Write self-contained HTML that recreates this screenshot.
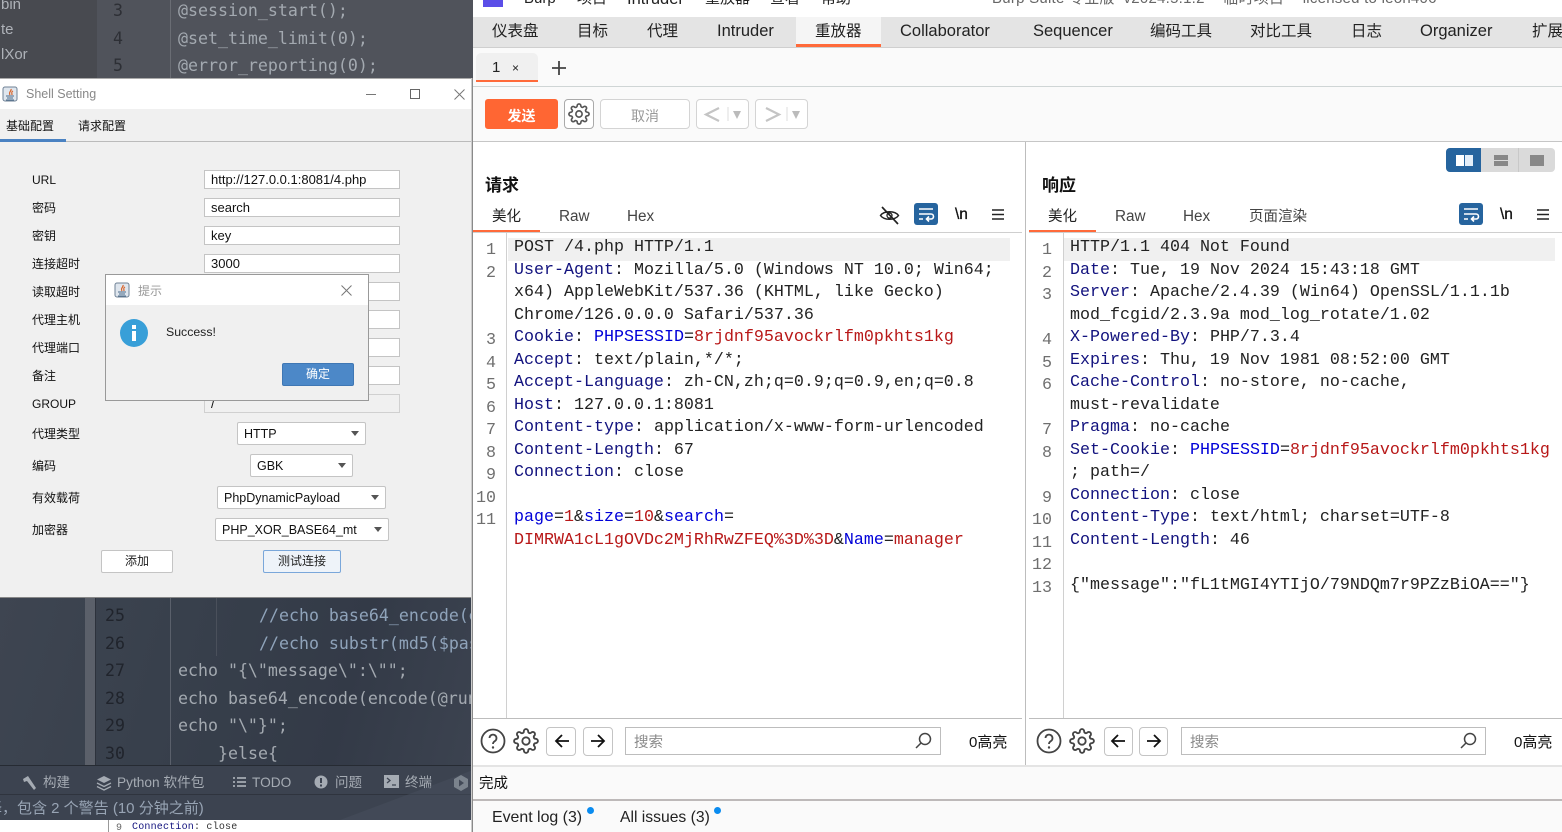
<!DOCTYPE html>
<html><head><meta charset="utf-8">
<style>
html,body{margin:0;padding:0;width:1562px;height:832px;overflow:hidden;background:#fff}
body{position:relative;font-family:"Liberation Sans","Noto Sans CJK SC",sans-serif;color:#111}
.a,.t,.b,svg.a{position:absolute}
.t{white-space:nowrap;line-height:1}
.dk{font-family:"DejaVu Sans Mono",monospace;font-size:16.6px;color:#a3a9b0;white-space:pre;position:absolute;line-height:20px}
.ln{color:#2d2f35}
.ln2{color:#20242c}
.lb{position:absolute;left:32px;font-size:12px;line-height:14px;color:#111;white-space:nowrap}
.f{position:absolute;left:204px;width:194px;height:17px;background:#fff;border:1px solid #c4c4c4;font-size:13px;line-height:17px;text-indent:6px;color:#111}
.cb{position:absolute;height:21px;background:#fff;border:1px solid #c4c4c4;border-radius:2px;font-size:12.5px;line-height:22px;text-indent:6px;color:#111;white-space:nowrap}
.cb i{position:absolute;right:6px;top:8px;width:0;height:0;border:4.5px solid transparent;border-top:5px solid #555;border-bottom:0}
.bt{position:absolute;background:#fff;border:1px solid #c4c4c4;border-radius:2px;text-align:center;font-size:12px;line-height:21px;color:#222}
.tab{position:absolute;top:24px;font-size:15.5px;line-height:16px;color:#222;white-space:nowrap}
.tab.l{font-size:16.5px;top:23px}
.code{position:absolute;margin:0;font-family:"Liberation Mono",monospace;font-size:16.67px;line-height:22.5px;color:#222;white-space:pre}
.num{position:absolute;margin:0;font-family:"Liberation Mono",monospace;font-size:16.67px;line-height:22.5px;color:#6f6f6f;white-space:pre;text-align:right}
.k{color:#12127e}.n{color:#0000d8}.v{color:#b81818}
.sb{position:absolute;background:#fff;border:1px solid #c4c4c4;border-radius:4px;box-sizing:border-box}
.sub{position:absolute;top:209px;font-size:14.5px;line-height:16px;color:#444}
.sub.l{font-size:15.300px}
.srch{position:absolute;top:727px;height:28px;box-sizing:border-box;border:1px solid #bdbdbd;background:#fff;font-size:14.5px;line-height:30px;text-indent:8px;color:#8a8a8a}
</style></head><body>
<svg width="0" height="0" style="position:absolute"><defs>
<g id="gear" fill="none" stroke-linecap="round" stroke-linejoin="round"><circle cx="12" cy="12" r="3.4"/><path d="M19.4 15a1.65 1.65 0 0 0 .33 1.82l.06.06a2 2 0 0 1 0 2.83 2 2 0 0 1-2.83 0l-.06-.06a1.65 1.65 0 0 0-1.82-.33 1.65 1.65 0 0 0-1 1.51V21a2 2 0 0 1-2 2 2 2 0 0 1-2-2v-.09A1.65 1.65 0 0 0 9 19.4a1.65 1.65 0 0 0-1.82.33l-.06.06a2 2 0 0 1-2.83 0 2 2 0 0 1 0-2.83l.06-.06a1.65 1.65 0 0 0 .33-1.82 1.65 1.65 0 0 0-1.51-1H3a2 2 0 0 1-2-2 2 2 0 0 1 2-2h.09A1.65 1.65 0 0 0 4.6 9a1.65 1.65 0 0 0-.33-1.82l-.06-.06a2 2 0 0 1 0-2.83 2 2 0 0 1 2.83 0l.06.06a1.65 1.65 0 0 0 1.82.33H9a1.65 1.65 0 0 0 1-1.51V3a2 2 0 0 1 2-2 2 2 0 0 1 2 2v.09a1.65 1.65 0 0 0 1 1.51 1.65 1.65 0 0 0 1.82-.33l.06-.06a2 2 0 0 1 2.83 0 2 2 0 0 1 0 2.83l-.06.06a1.65 1.65 0 0 0-.33 1.82V9a1.65 1.65 0 0 0 1.51 1H21a2 2 0 0 1 2 2 2 2 0 0 1-2 2h-.09a1.65 1.65 0 0 0-1.51 1z"/></g>
<g id="java"><rect x="1" y="1" width="14" height="14" rx="2" fill="#dfe6ee" stroke="#6f8296"/><path d="M9 3c1 2-3 3-1 6M11 5c-2 1-1 2-1 4" stroke="#d9642a" fill="none" stroke-width="1.2"/><path d="M4 10h8M5 12h6M4 14h8" stroke="#4a6a8a"/></g>
<g id="wrap"><rect width="24" height="22" rx="3" fill="#26649e"/><path d="M5 6h14M5 11h12a2.5 2.5 0 0 1 0 5h-4M15 13.5l-2.5 2.5 2.5 2.5M5 16h4" fill="none" stroke="#fff" stroke-width="1.6"/></g>
<g id="menu"><path d="M0 1h12M0 5.500h12M0 10h12" stroke="#222" stroke-width="1.6"/></g>
</defs></svg>

<!-- LEFT TOP DARK -->
<div class="a" style="left:0;top:0;width:473px;height:79px;background:#50535b"></div>
<div class="a" style="left:0;top:0;width:97px;height:79px;background:#484a50"></div>
<div class="a" style="left:170px;top:0;width:1px;height:79px;background:#6a6d74"></div>
<div class="t" style="left:1px;top:-3px;font-size:15px;color:#aeb2b8">bin</div>
<div class="t" style="left:1px;top:22px;font-size:15px;color:#aeb2b8">te</div>
<div class="t" style="left:1px;top:47px;font-size:15px;color:#aeb2b8">lXor</div>
<div class="dk ln" style="left:113px;top:1px">3</div>
<div class="dk ln" style="left:113px;top:29px">4</div>
<div class="dk ln" style="left:113px;top:56px">5</div>
<div class="dk" style="left:178px;top:1px">@session_start();</div>
<div class="dk" style="left:178px;top:29px">@set_time_limit(0);</div>
<div class="dk" style="left:178px;top:56px">@error_reporting(0);</div>

<!-- LEFT BOTTOM DARK -->
<div class="a" style="left:0;top:597px;width:473px;height:223px;background:linear-gradient(105deg,#3e4551 0%,#38404c 35%,#333a47 70%,#3d4451 100%)"></div>
<div class="a" style="left:85px;top:598px;width:10px;height:167px;background:#5b606a"></div>
<div class="a" style="left:95px;top:598px;width:1px;height:167px;background:#2d323c"></div>
<div class="a" style="left:170px;top:598px;width:1px;height:167px;background:#5a606b"></div>
<div class="a" style="left:216px;top:598px;width:1px;height:58px;background:#4a505b"></div>
<div class="dk ln2" style="left:105px;top:606px">25</div>
<div class="dk ln2" style="left:105px;top:634px">26</div>
<div class="dk ln2" style="left:105px;top:661px">27</div>
<div class="dk ln2" style="left:105px;top:689px">28</div>
<div class="dk ln2" style="left:105px;top:716px">29</div>
<div class="dk ln2" style="left:105px;top:744px">30</div>
<div class="dk" style="left:259px;top:606px;color:#8fa3ba">//echo base64_encode(e</div>
<div class="dk" style="left:259px;top:634px;color:#8fa3ba">//echo substr(md5($pas</div>
<div class="dk" style="left:178px;top:661px">echo "{\"message\":\"";</div>
<div class="dk" style="left:178px;top:689px">echo base64_encode(encode(@run</div>
<div class="dk" style="left:178px;top:716px">echo "\"}";</div>
<div class="dk" style="left:218px;top:744px">}else{</div>
<div class="a" style="left:0;top:765px;width:473px;height:1px;background:#262b33"></div>
<div class="a" style="left:0;top:766px;width:473px;height:54px;background:#3c4350"></div>
<div class="a" style="left:0;top:794px;width:473px;height:1px;background:#2f343e"></div>
<svg class="a" style="left:22px;top:775px" width="16" height="17"><path d="M1 4l5-3 8 12-2 2-7-9-3 1z" fill="#a5abb3"/></svg>
<div class="t" style="left:43px;top:776px;font-size:13.5px;color:#a5abb3">构建</div>
<svg class="a" style="left:96px;top:775px" width="16" height="17"><path d="M8 1l7 3.500-7 3.500-7-3.500z" fill="#a5abb3"/><path d="M1 8l7 3.500 7-3.500M1 11.500l7 3.500 7-3.500" stroke="#a5abb3" fill="none" stroke-width="1.300"/></svg>
<div class="t" style="left:117px;top:776px;font-size:13.700px;color:#a5abb3">Python 软件包</div>
<svg class="a" style="left:233px;top:776px" width="13" height="12"><path d="M0 2h2M4 2h9M0 6h2M4 6h9M0 10h2M4 10h9" stroke="#a5abb3" stroke-width="1.800"/></svg>
<div class="t" style="left:252px;top:776px;font-size:13.700px;color:#a5abb3">TODO</div>
<svg class="a" style="left:314px;top:775px" width="14" height="14"><circle cx="7" cy="7" r="6.500" fill="#a5abb3"/><path d="M7 3v5M7 9.500v2" stroke="#3c4350" stroke-width="2"/></svg>
<div class="t" style="left:335px;top:776px;font-size:13.500px;color:#a5abb3">问题</div>
<svg class="a" style="left:384px;top:775px" width="15" height="13"><rect width="15" height="13" fill="#a5abb3"/><path d="M3 3l3 2.500-3 2.500M8 10h4" stroke="#3c4350" fill="none" stroke-width="1.300"/></svg>
<div class="t" style="left:405px;top:776px;font-size:13.500px;color:#a5abb3">终端</div>
<svg class="a" style="left:453px;top:775px" width="16" height="16"><path d="M8 0l7 4v8l-7 4-7-4V4z" fill="#a5abb3"/><path d="M6 4.500l5 3.500-5 3.500z" fill="#3c4350"/></svg>
<div class="t" style="left:-13px;top:801px;font-size:15px;color:#98a4b4">译，包含 2 个警告 (10 分钟之前)</div>
<svg class="a" style="left:340px;top:770px" width="133" height="50"><path d="M0 50L133 0V50z" fill="#4a5160" opacity=".45"/></svg>

<!-- Under strip -->
<div class="a" style="left:0;top:820px;width:473px;height:12px;background:#fff"></div>
<div class="a" style="left:108px;top:820px;width:1px;height:12px;background:#999"></div>
<div class="t" style="left:116px;top:824px;font-size:10px;font-family:'Liberation Mono',monospace;color:#666">9</div>
<div class="t" style="left:132px;top:823px;font-size:10px;font-family:'Liberation Mono',monospace;color:#12127e;letter-spacing:.2px">Connection<span style="color:#333">: close</span></div>

<!-- SHELL SETTING WINDOW -->
<div class="a" style="left:0;top:78px;width:473px;height:520px;background:#f0f0f0;border-top:1px solid #aaa;border-bottom:1px solid #888;box-sizing:border-box"></div>
<div class="a" style="left:0;top:79px;width:472px;height:30px;background:#fff"></div>
<svg class="a" style="left:2px;top:86px" width="16" height="16"><use href="#java"/></svg>
<div class="t" style="left:26px;top:88px;font-size:12.500px;color:#888">Shell Setting</div>
<div class="a" style="left:366px;top:94px;width:10px;height:1px;background:#777"></div>
<div class="a" style="left:410px;top:89px;width:8px;height:8px;border:1px solid #666"></div>
<svg class="a" style="left:454px;top:89px" width="11" height="11"><path d="M.5.500l10 10M10.500.500l-10 10" stroke="#777"/></svg>
<div class="t" style="left:6px;top:120px;font-size:12px;color:#111">基础配置</div>
<div class="t" style="left:78px;top:120px;font-size:12px;color:#111">请求配置</div>
<div class="a" style="left:0;top:141px;width:472px;height:1px;background:#bbb"></div>
<div class="a" style="left:0;top:139px;width:66px;height:3px;background:#4a82c2"></div>

<div class="lb" style="top:173px">URL</div>
<div class="lb" style="top:201px">密码</div>
<div class="lb" style="top:229px">密钥</div>
<div class="lb" style="top:257px">连接超时</div>
<div class="lb" style="top:285px">读取超时</div>
<div class="lb" style="top:313px">代理主机</div>
<div class="lb" style="top:341px">代理端口</div>
<div class="lb" style="top:369px">备注</div>
<div class="lb" style="top:397px">GROUP</div>
<div class="lb" style="top:427px">代理类型</div>
<div class="lb" style="top:459px">编码</div>
<div class="lb" style="top:491px">有效载荷</div>
<div class="lb" style="top:523px">加密器</div>

<div class="f" style="top:170px">http://127.0.0.1:8081/4.php</div>
<div class="f" style="top:198px">search</div>
<div class="f" style="top:226px">key</div>
<div class="f" style="top:254px">3000</div>
<div class="f" style="top:282px"></div>
<div class="f" style="top:310px"></div>
<div class="f" style="top:338px"></div>
<div class="f" style="top:366px"></div>
<div class="f" style="top:394px;background:#f0f0f0;border-color:#d0d0d0">/</div>

<div class="cb" style="left:237px;top:422px;width:127px">HTTP<i></i></div>
<div class="cb" style="left:250px;top:454px;width:101px">GBK<i></i></div>
<div class="cb" style="left:217px;top:486px;width:167px">PhpDynamicPayload<i></i></div>
<div class="cb" style="left:215px;top:518px;width:172px">PHP_XOR_BASE64_mt<i></i></div>
<div class="bt" style="left:101px;top:550px;width:70px;height:21px">添加</div>
<div class="bt" style="left:263px;top:550px;width:76px;height:21px;background:#eef3f9;border-color:#7aa7da">测试连接</div>

<!-- DIALOG -->
<div class="a" style="left:105px;top:274px;width:262px;height:125px;background:#f0f0f0;border:1px solid #999"></div>
<div class="a" style="left:106px;top:275px;width:262px;height:30px;background:#fff"></div>
<svg class="a" style="left:114px;top:282px" width="16" height="16"><use href="#java"/></svg>
<div class="t" style="left:138px;top:285px;font-size:12px;color:#999">提示</div>
<svg class="a" style="left:341px;top:285px" width="11" height="11"><path d="M.5.500l10 10M10.500.500l-10 10" stroke="#777"/></svg>
<svg class="a" style="left:120px;top:319px" width="28" height="28"><circle cx="14" cy="14" r="14" fill="#389fd8"/><rect x="12" y="6" width="4" height="4" fill="#fff"/><rect x="12" y="12" width="4" height="10" fill="#fff"/></svg>
<div class="t" style="left:166px;top:326px;font-size:12.300px;color:#222">Success!</div>
<div class="a" style="left:282px;top:363px;width:70px;height:21px;background:#4c88c8;border:1px solid #3f77b4;border-radius:2px;color:#fff;font-size:12px;line-height:21px;text-align:center">确定</div>

<div class="a" style="left:471px;top:78px;width:1px;height:754px;background:#ccc"></div>
<div class="a" style="left:472px;top:78px;width:1px;height:754px;background:#8a8a8a"></div>

<!-- BURP -->
<div class="a" style="left:473px;top:0;width:1089px;height:832px;background:#fff"></div>
<div class="a" style="left:483px;top:0;width:20px;height:7px;background:#5b4ee8"></div>
<div class="t" style="left:524px;top:-9px;font-size:15px;color:#222">Burp</div>
<div class="t" style="left:577px;top:-9px;font-size:15px;color:#222">项目</div>
<div class="t" style="left:627px;top:-9px;font-size:16.500px;color:#222">Intruder</div>
<div class="t" style="left:705px;top:-9px;font-size:15px;color:#222">重放器</div>
<div class="t" style="left:770px;top:-9px;font-size:15px;color:#222">查看</div>
<div class="t" style="left:821px;top:-9px;font-size:15px;color:#222">帮助</div>
<div class="t" style="left:992px;top:-9px;font-size:15px;color:#666;letter-spacing:.25px">Burp Suite 专业版 &nbsp;v2024.5.1.2 &nbsp;- 临时项目 &nbsp;- licensed to leon406</div>

<div class="a" style="left:473px;top:17px;width:1089px;height:31px;background:#e4e4e4;border-bottom:1px solid #cfcfcf;box-sizing:border-box"></div>
<div class="a" style="left:796px;top:17px;width:85px;height:30px;background:#f5f5f5;border-bottom:3px solid #ff6a3a;box-sizing:border-box"></div>
<div class="tab" style="left:492px">仪表盘</div>
<div class="tab" style="left:577px">目标</div>
<div class="tab" style="left:647px">代理</div>
<div class="tab l" style="left:717px">Intruder</div>
<div class="tab" style="left:815px">重放器</div>
<div class="tab l" style="left:900px">Collaborator</div>
<div class="tab l" style="left:1033px">Sequencer</div>
<div class="tab" style="left:1150px">编码工具</div>
<div class="tab" style="left:1250px">对比工具</div>
<div class="tab" style="left:1351px">日志</div>
<div class="tab l" style="left:1420px">Organizer</div>
<div class="tab" style="left:1532px">扩展</div>

<div class="a" style="left:473px;top:48px;width:1089px;height:93px;background:#fafafa"></div>
<div class="a" style="left:473px;top:86px;width:1089px;height:1px;background:#cfd5d5"></div>
<div class="a" style="left:476px;top:53px;width:62px;height:29px;background:#f0f0f0;border-radius:5px 5px 0 0;border-bottom:2px solid #ff6a3a;box-sizing:border-box"></div>
<div class="t" style="left:492px;top:60px;font-size:15px;color:#222">1</div>
<div class="t" style="left:512px;top:62px;font-size:12px;color:#222">×</div>
<svg class="a" style="left:551px;top:60px" width="16" height="16"><path d="M8 1v14M1 8h14" stroke="#444" stroke-width="1.800"/></svg>

<div class="a" style="left:485px;top:99px;width:73px;height:30px;background:#ff6633;border-radius:3px;color:#fff;font-size:14px;font-weight:bold;line-height:34px;text-align:center">发送</div>
<div class="sb" style="left:564px;top:99px;width:30px;height:30px;border-color:#aaa"></div>
<svg class="a" style="left:568px;top:103px" width="22" height="22" viewBox="0 0 24 24" stroke="#555" stroke-width="1.800"><use href="#gear"/></svg>
<div class="sb" style="left:600px;top:99px;width:90px;height:30px;color:#999;font-size:14px;line-height:32px;text-align:center;border-color:#d4d4d4">取消</div>
<div class="sb" style="left:696px;top:99px;width:53px;height:30px;border-color:#d4d4d4"></div>
<svg class="a" style="left:696px;top:99px" width="53" height="30"><path d="M23 9l-13 6.500 13 6.500" fill="none" stroke="#c4c4c4" stroke-width="2.200"/><path d="M32 8v14" stroke="#ddd"/><path d="M37 12h8l-4 8z" fill="#bbb"/></svg>
<div class="sb" style="left:755px;top:99px;width:53px;height:30px;border-color:#d4d4d4"></div>
<svg class="a" style="left:755px;top:99px" width="53" height="30"><path d="M11 9l13 6.500-13 6.500" fill="none" stroke="#c4c4c4" stroke-width="2.200"/><path d="M32 8v14" stroke="#ddd"/><path d="M37 12h8l-4 8z" fill="#bbb"/></svg>

<div class="a" style="left:473px;top:141px;width:1089px;height:1px;background:#c6c6c6"></div>
<div class="a" style="left:1025px;top:142px;width:1px;height:623px;background:#bdbdbd"></div>

<!-- view toggle -->
<div class="a" style="left:1446px;top:148px;width:109px;height:24px;background:#dadada;border-radius:4px"></div>
<div class="a" style="left:1446px;top:148px;width:35px;height:24px;background:#26649e;border-radius:4px 0 0 4px"></div>
<div class="a" style="left:1456px;top:155px;width:8px;height:11px;background:#fff"></div>
<div class="a" style="left:1465px;top:155px;width:8px;height:11px;background:#e4eef8"></div>
<div class="a" style="left:1494px;top:155px;width:14px;height:5px;background:#888"></div>
<div class="a" style="left:1494px;top:161px;width:14px;height:5px;background:#888"></div>
<div class="a" style="left:1518px;top:148px;width:1px;height:24px;background:#c8c8c8"></div>
<div class="a" style="left:1530px;top:155px;width:14px;height:11px;background:#888"></div>

<!-- Request head -->
<div class="t" style="left:485px;top:177px;font-size:17px;font-weight:bold;color:#111">请求</div>
<div class="sub" style="left:492px;color:#222">美化</div>
<div class="sub l" style="left:559px">Raw</div>
<div class="sub l" style="left:627px">Hex</div>
<div class="a" style="left:473px;top:232px;width:549px;height:1px;background:#cfcfcf"></div>
<div class="a" style="left:473px;top:230px;width:67px;height:2px;background:#ff6a3a"></div>
<svg class="a" style="left:879px;top:205px" width="21" height="20"><path d="M1.500 10.500C5 5.500 16 5.500 19.500 10.500 16 15.500 5 15.500 1.500 10.500z" fill="none" stroke="#222" stroke-width="1.500"/><circle cx="10.500" cy="10.500" r="2.500" fill="none" stroke="#222" stroke-width="1.300"/><path d="M3 2l16 17" stroke="#222" stroke-width="1.700"/></svg>
<svg class="a" style="left:914px;top:203px" width="24" height="22"><use href="#wrap"/></svg>
<div class="t" style="left:955px;top:207px;font-size:15.500px;color:#111;-webkit-text-stroke:.3px #111">\n</div>
<svg class="a" style="left:992px;top:209px" width="12" height="12"><use href="#menu"/></svg>

<!-- Response head -->
<div class="t" style="left:1042px;top:177px;font-size:17px;font-weight:bold;color:#111">响应</div>
<div class="sub" style="left:1048px;color:#222">美化</div>
<div class="sub l" style="left:1115px">Raw</div>
<div class="sub l" style="left:1183px">Hex</div>
<div class="sub" style="left:1249px">页面渲染</div>
<div class="a" style="left:1029px;top:232px;width:533px;height:1px;background:#cfcfcf"></div>
<div class="a" style="left:1029px;top:230px;width:67px;height:2px;background:#ff6a3a"></div>
<svg class="a" style="left:1459px;top:203px" width="24" height="22"><use href="#wrap"/></svg>
<div class="t" style="left:1500px;top:207px;font-size:15.500px;color:#111;-webkit-text-stroke:.3px #111">\n</div>
<svg class="a" style="left:1537px;top:209px" width="12" height="12"><use href="#menu"/></svg>

<!-- Editors -->
<div class="a" style="left:506px;top:233px;width:1px;height:485px;background:#d0d0d0"></div>
<div class="a" style="left:508px;top:238px;width:502px;height:23px;background:#f0f0f0"></div>
<pre class="num" style="left:470px;top:240px;width:26px">1
2


3
4
5
6
7
8
9
10
11</pre>
<pre class="code" style="left:514px;top:237px">POST /4.php HTTP/1.1
<span class="k">User-Agent</span>: Mozilla/5.0 (Windows NT 10.0; Win64;
x64) AppleWebKit/537.36 (KHTML, like Gecko)
Chrome/126.0.0.0 Safari/537.36
<span class="k">Cookie</span>: <span class="n">PHPSESSID</span>=<span class="v">8rjdnf95avockrlfm0pkhts1kg</span>
<span class="k">Accept</span>: text/plain,*/*;
<span class="k">Accept-Language</span>: zh-CN,zh;q=0.9;q=0.9,en;q=0.8
<span class="k">Host</span>: 127.0.0.1:8081
<span class="k">Content-type</span>: application/x-www-form-urlencoded
<span class="k">Content-Length</span>: 67
<span class="k">Connection</span>: close

<span class="n">page</span>=<span class="v">1</span>&amp;<span class="n">size</span>=<span class="v">10</span>&amp;<span class="n">search</span>=
<span class="v">DIMRWA1cL1gOVDc2MjRhRwZFEQ%3D%3D</span>&amp;<span class="n">Name</span>=<span class="v">manager</span></pre>

<div class="a" style="left:1063px;top:233px;width:1px;height:485px;background:#d0d0d0"></div>
<div class="a" style="left:1064px;top:238px;width:491px;height:23px;background:#f0f0f0"></div>
<pre class="num" style="left:1026px;top:240px;width:26px">1
2
3

4
5
6

7
8

9
10
11
12
13</pre>
<pre class="code" style="left:1070px;top:237px">HTTP/1.1 404 Not Found
<span class="k">Date</span>: Tue, 19 Nov 2024 15:43:18 GMT
<span class="k">Server</span>: Apache/2.4.39 (Win64) OpenSSL/1.1.1b
mod_fcgid/2.3.9a mod_log_rotate/1.02
<span class="k">X-Powered-By</span>: PHP/7.3.4
<span class="k">Expires</span>: Thu, 19 Nov 1981 08:52:00 GMT
<span class="k">Cache-Control</span>: no-store, no-cache,
must-revalidate
<span class="k">Pragma</span>: no-cache
<span class="k">Set-Cookie</span>: <span class="n">PHPSESSID</span>=<span class="v">8rjdnf95avockrlfm0pkhts1kg</span>
; path=/
<span class="k">Connection</span>: close
<span class="k">Content-Type</span>: text/html; charset=UTF-8
<span class="k">Content-Length</span>: 46

{"message":"fL1tMGI4YTIjO/79NDQm7r9PZzBiOA=="}</pre>

<!-- Search bars -->
<div class="a" style="left:473px;top:718px;width:549px;height:1px;background:#bdbdbd"></div>
<div class="a" style="left:1029px;top:718px;width:533px;height:1px;background:#bdbdbd"></div>

<svg class="a" style="left:480px;top:728px" width="26" height="26"><circle cx="13" cy="13" r="11.500" fill="none" stroke="#444" stroke-width="1.800"/><path d="M9.500 10a3.500 3.500 0 1 1 5.500 3c-1.300.8-2 1.500-2 3" fill="none" stroke="#444" stroke-width="1.800"/><circle cx="13" cy="19.500" r="1.200" fill="#444"/></svg>
<svg class="a" style="left:513px;top:728px" width="26" height="26" viewBox="0 0 24 24" stroke="#444" stroke-width="1.700"><use href="#gear"/></svg>
<div class="sb" style="left:546px;top:727px;width:30px;height:29px"></div>
<svg class="a" style="left:554px;top:733px" width="16" height="16"><path d="M15 8H2M8 2L2 8l6 6" fill="none" stroke="#111" stroke-width="1.800"/></svg>
<div class="sb" style="left:583px;top:727px;width:30px;height:29px"></div>
<svg class="a" style="left:590px;top:733px" width="16" height="16"><path d="M1 8h13M8 2l6 6-6 6" fill="none" stroke="#111" stroke-width="1.800"/></svg>
<div class="srch" style="left:625px;width:316px">搜索</div>
<svg class="a" style="left:915px;top:732px" width="17" height="17"><circle cx="10" cy="7" r="5.500" fill="none" stroke="#444" stroke-width="1.500"/><path d="M6 11l-5 5" stroke="#444" stroke-width="1.500"/></svg>
<div class="t" style="left:969px;top:735px;font-size:15px;color:#111">0高亮</div>

<svg class="a" style="left:1036px;top:728px" width="26" height="26"><circle cx="13" cy="13" r="11.500" fill="none" stroke="#444" stroke-width="1.800"/><path d="M9.500 10a3.500 3.500 0 1 1 5.500 3c-1.300.8-2 1.500-2 3" fill="none" stroke="#444" stroke-width="1.800"/><circle cx="13" cy="19.500" r="1.200" fill="#444"/></svg>
<svg class="a" style="left:1069px;top:728px" width="26" height="26" viewBox="0 0 24 24" stroke="#444" stroke-width="1.700"><use href="#gear"/></svg>
<div class="sb" style="left:1104px;top:727px;width:29px;height:29px"></div>
<svg class="a" style="left:1110px;top:733px" width="16" height="16"><path d="M15 8H2M8 2L2 8l6 6" fill="none" stroke="#111" stroke-width="1.800"/></svg>
<div class="sb" style="left:1139px;top:727px;width:29px;height:29px"></div>
<svg class="a" style="left:1146px;top:733px" width="16" height="16"><path d="M1 8h13M8 2l6 6-6 6" fill="none" stroke="#111" stroke-width="1.800"/></svg>
<div class="srch" style="left:1181px;width:305px">搜索</div>
<svg class="a" style="left:1460px;top:732px" width="17" height="17"><circle cx="10" cy="7" r="5.500" fill="none" stroke="#444" stroke-width="1.500"/><path d="M6 11l-5 5" stroke="#444" stroke-width="1.500"/></svg>
<div class="t" style="left:1514px;top:735px;font-size:15px;color:#111">0高亮</div>

<!-- Status -->
<div class="a" style="left:473px;top:765px;width:1089px;height:2px;background:#e4e4e4"></div>
<div class="a" style="left:473px;top:767px;width:1089px;height:32px;background:#fafafa"></div>
<div class="t" style="left:479px;top:777px;font-size:14.5px;color:#111">完成</div>
<div class="a" style="left:473px;top:799px;width:1089px;height:2px;background:#bdb9b9"></div>
<div class="a" style="left:473px;top:801px;width:1089px;height:31px;background:#fafafa"></div>
<div class="t" style="left:492px;top:810px;font-size:15.900px;color:#222">Event log (3)</div>
<div class="a" style="left:587px;top:807px;width:7px;height:7px;border-radius:50%;background:#0a8cf0"></div>
<div class="t" style="left:620px;top:810px;font-size:15.700px;color:#222">All issues (3)</div>
<div class="a" style="left:714px;top:807px;width:7px;height:7px;border-radius:50%;background:#0a8cf0"></div>
</body></html>
